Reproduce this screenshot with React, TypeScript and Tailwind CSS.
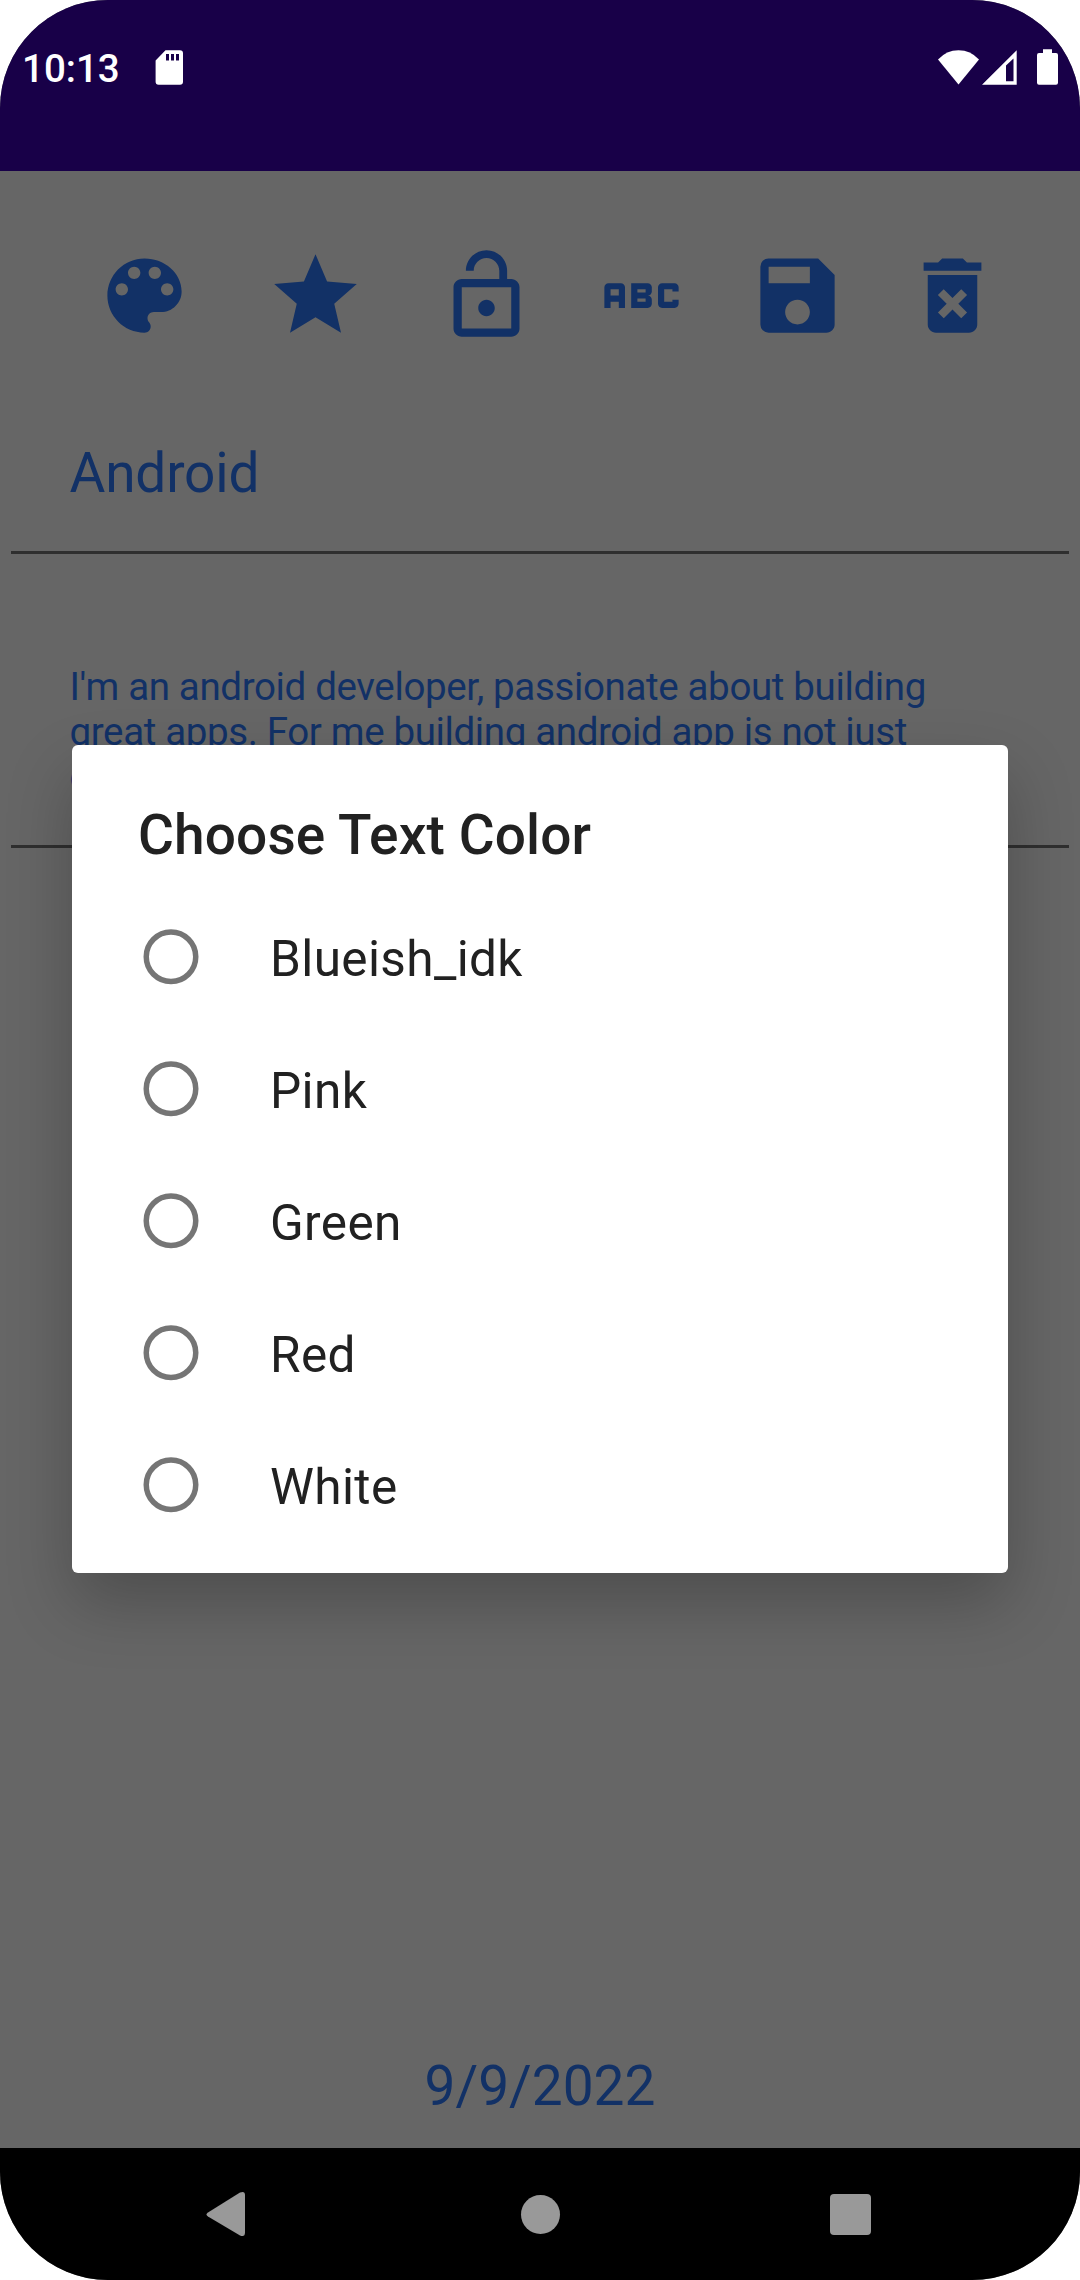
import { MdStar, MdLockOpen, MdAbc, MdSave, MdDeleteForever } from "react-icons/md";

const colors = ["Blueish_idk", "Pink", "Green", "Red", "White"];

function StatusBar() {
  return (
    <header className="flex h-[171px] shrink-0 items-start bg-[#180048] text-white">
      <span className="ml-[22px] mt-[46px] w-[99px] whitespace-nowrap text-[38.5px] font-medium leading-[45px]">
        10:13
      </span>
      <svg className="ml-[34px] mt-[50px] h-[35px] w-[28px]" viewBox="0 0 28 35" fill="currentColor">
        <path
          fillRule="evenodd"
          d="M10.5 0.2H25Q28 0.2 28 3.2V31.7Q28 34.7 25 34.7H3.6Q0.6 34.7 0.6 31.7V10.5ZM11 4V10.5H14V4ZM16 4V10.5H19V4ZM21 4V10.5H24V4Z"
        />
      </svg>
      <div className="ml-auto mt-[49px] flex items-end">
        <svg className="h-[36px] w-[42px]" viewBox="0 0 42 36" fill="currentColor">
          <path d="M20.5 35.5L0 10.5Q8.5 1.3 20.5 1.3T41 10.5Z" />
        </svg>
        <svg className="ml-[2px] h-[36px] w-[35px]" viewBox="0 0 35 36" fill="currentColor">
          <path fillRule="evenodd" d="M0 35.7L34.7 1.2V35.7ZM24 16.5V32.3H31.5V9.5Z" />
        </svg>
        <svg className="ml-[20px] mr-[22px] h-[36px] w-[21px]" viewBox="0 0 21 36" fill="currentColor">
          <path d="M6 0.3H15V4H19Q21 4 21 6V33.7Q21 35.7 19 35.7H2Q0 35.7 0 33.7V6Q0 4 2 4H6Z" />
        </svg>
      </div>
    </header>
  );
}

function PaletteIcon() {
  return (
    <svg viewBox="0 0 24 24" fill="currentColor">
      <path d="M12 3c-4.97 0-9 4.03-9 9s4.03 9 9 9c.83 0 1.5-.67 1.5-1.5 0-.39-.15-.74-.39-1.01-.23-.26-.38-.61-.38-.99 0-.83.67-1.5 1.5-1.5H16c2.76 0 5-2.24 5-5 0-4.42-4.03-8-9-8zm-5.5 9c-.83 0-1.5-.67-1.5-1.5S5.67 9 6.5 9 8 9.67 8 10.5 7.33 12 6.5 12zm3-4C8.67 8 8 7.33 8 6.5S8.67 5 9.5 5s1.5.67 1.5 1.5S10.33 8 9.5 8zm5 0c-.83 0-1.5-.67-1.5-1.5S13.67 5 14.5 5s1.5.67 1.5 1.5S15.33 8 14.5 8zm3 4c-.83 0-1.5-.67-1.5-1.5S16.67 9 17.5 9s1.500.67 1.500 1.500-.67 1.500-1.500 1.500z" />
    </svg>
  );
}

function Toolbar() {
  return (
    <div className="flex pl-[94.5px] pt-[75px] [&>svg]:size-[99px] [&>svg]:shrink-0">
      <PaletteIcon />
      <MdStar className="ml-[72.5px]" />
      <MdLockOpen className="ml-[71.5px]" />
      <MdAbc className="ml-[56.5px]" />
      <MdSave className="ml-[57px]" />
      <MdDeleteForever className="ml-[56px]" />
    </div>
  );
}

function ColorDialog() {
  return (
    <section
      role="dialog"
      className="absolute left-[72px] top-[745px] flex h-[828px] w-[936px] flex-col rounded-[6px] bg-white text-[#212121] shadow-[0_30px_66px_rgba(0,0,0,0.24)]"
    >
      <h1 className="h-[146px] pl-[66px] pt-[58px] text-[55px] font-medium leading-[65px] tracking-[0.13px]">
        Choose Text Color
      </h1>
      <ul>
        {colors.map((name) => (
          <li key={name} className="flex h-[132px] items-center pl-[71px]">
            <svg className="size-[56px] shrink-0 text-[#757575]" viewBox="0 0 56 56" fill="none" stroke="currentColor">
              <circle cx="28" cy="27.7" r="24.75" strokeWidth="5.5" />
            </svg>
            <span className="ml-[71px] mt-[4px] text-[49.5px] leading-[58px] tracking-[0.38px]">{name}</span>
          </li>
        ))}
      </ul>
    </section>
  );
}

function NavigationBar() {
  return (
    <nav className="flex h-[132px] shrink-0 items-center bg-black text-[#999999]">
      <svg className="ml-[206px] h-[46px] w-[39px]" viewBox="0 0 39 46" fill="currentColor">
        <path d="M2 21.5L34 1.5Q39 -0.5 39 4V41.5Q39 46.500 34 44.500L2 25.500Q-1 23.500 2 21.500Z" />
      </svg>
      <span className="ml-[276px] size-[39px] rounded-full bg-[#999999]" />
      <span className="ml-[270px] size-[41px] rounded-[4px] bg-[#999999]" />
    </nav>
  );
}

export default function App() {
  return (
    <div className="bg-white">
      <div className="relative flex h-[2280px] w-[1080px] flex-col overflow-hidden rounded-[108px] bg-[#666666] font-['Roboto',sans-serif]">
        <StatusBar />
        <main className="flex flex-1 flex-col text-[#123166]">
          <Toolbar />
          <div className="mx-[11px] mt-[96px] h-[113px] border-b-[3px] border-[#2f2f2f] pl-[58.5px] text-[55px] leading-[65px] tracking-[-0.2px]">
            Android
          </div>
          <div className="mx-[11px] mt-[110px] h-[184px] border-b-[3px] border-[#2f2f2f] pl-[58.5px] text-[38.5px] leading-[45px] tracking-[-0.36px]">
            <p>I'm an android developer, passionate about building</p>
            <p>great apps. For me building android app is not just</p>
            <p>coding</p>
          </div>
          <time className="mb-[29px] mt-auto text-center text-[55px] leading-[65px]">9/9/2022</time>
        </main>
        <NavigationBar />
        <ColorDialog />
      </div>
    </div>
  );
}
